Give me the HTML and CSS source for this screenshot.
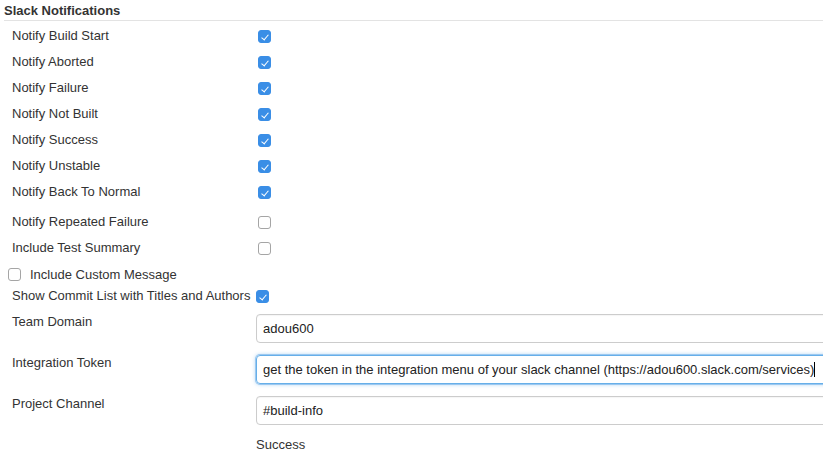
FILE: index.html
```html
<!DOCTYPE html>
<html>
<head>
<meta charset="utf-8">
<link rel="stylesheet" href="styles.css">
</head>
<body>
<div class="section">
  <div class="section-title">Slack Notifications</div>
  <div class="rows">
    <div class="row"><div class="label">Notify Build Start</div><span class="cb on"></span></div>
    <div class="row"><div class="label">Notify Aborted</div><span class="cb on"></span></div>
    <div class="row"><div class="label">Notify Failure</div><span class="cb on"></span></div>
    <div class="row"><div class="label">Notify Not Built</div><span class="cb on"></span></div>
    <div class="row"><div class="label">Notify Success</div><span class="cb on"></span></div>
    <div class="row"><div class="label">Notify Unstable</div><span class="cb on"></span></div>
    <div class="row tall"><div class="label">Notify Back To Normal</div><span class="cb on"></span></div>
    <div class="row"><div class="label">Notify Repeated Failure</div><span class="cb"></span></div>
    <div class="row"><div class="label">Include Test Summary</div><span class="cb"></span></div>
    <div class="row inline"><span class="cb"></span><span class="inline-label">Include Custom Message</span></div>
    <div class="row commit"><div class="label">Show Commit List with Titles and Authors</div><span class="cb on"></span></div>
    <div class="row text"><div class="label">Team Domain</div><div class="field">adou600</div></div>
    <div class="row text"><div class="label">Integration Token</div><div class="field focus">get the token in the integration menu of your slack channel (https://adou600.slack.com/services)<span class="caret"></span></div></div>
    <div class="row text"><div class="label">Project Channel</div><div class="field">#build-info</div></div>
    <div class="row status"><div class="label"></div><div class="status-text">Success</div></div>
  </div>
</div>
</body>
</html>
```

FILE: styles.css
```css
html, body {
  margin: 0;
  padding: 0;
  background: #fff;
  overflow: hidden;
}
body {
  font-family: "Liberation Sans", Arial, sans-serif;
  font-size: 13px;
  line-height: 15px;
  color: #333;
}
.section {
  padding: 0 0 0 4px;
}
.section-title {
  font-weight: bold;
  padding-top: 3px;
  height: 17px;
  border-bottom: 1px solid #e3e3e3;
}
.rows {
  padding-left: 8px;
  padding-top: 3px;
}
.row {
  display: flex;
  align-items: flex-start;
  height: 26px;
}
.row.tall {
  height: 30px;
}
.label {
  width: 243px;
  flex: none;
  padding-top: 4px;
  white-space: nowrap;
}
.cb {
  flex: none;
  box-sizing: border-box;
  width: 13px;
  height: 13px;
  margin-top: 6px;
  margin-left: 3px;
  border: 1px solid #a5a5a5;
  border-radius: 3px;
  background: #fff;
  position: relative;
}
.cb.on {
  background: #3a8ee6;
  border-color: #3a8ee6;
}
.cb.on::after {
  content: "";
  position: absolute;
  left: 3.5px;
  top: 1.5px;
  width: 3px;
  height: 6px;
  border: solid #fff;
  border-width: 0 1.6px 1.6px 0;
  transform: rotate(40deg);
}
.row.inline {
  margin-left: -4px;
  height: 22px;
}
.row.inline .cb {
  margin-top: 6px;
  margin-left: 0;
}
.inline-label {
  margin-left: 9px;
  padding-top: 5px;
}
.row.commit {
  height: 26px;
}
.row.commit .label {
  padding-top: 4px;
}
.row.commit .cb {
  margin-top: 6px;
  margin-left: 1px;
}
.row.text {
  height: 41px;
}
.row.text .label {
  padding-top: 4px;
  width: 244px;
}
.field {
  flex: none;
  box-sizing: border-box;
  width: 620px;
  height: 29px;
  margin-top: 4px;
  padding: 6px 6px;
  border: 1px solid #ccc;
  border-radius: 4px;
  white-space: nowrap;
  color: #222;
  box-shadow: inset 0 1px 1px rgba(0,0,0,0.04);
}
.field.focus {
  border-color: #66afe9;
  box-shadow: 0 0 0 1px #9cc8f0, 0 0 4px rgba(102,175,233,0.7);
}
.caret {
  display: inline-block;
  width: 1px;
  height: 15px;
  background: #000;
  vertical-align: -3px;
}
.status-text {
  padding-top: 4px;
  padding-left: 1px;
}
```
